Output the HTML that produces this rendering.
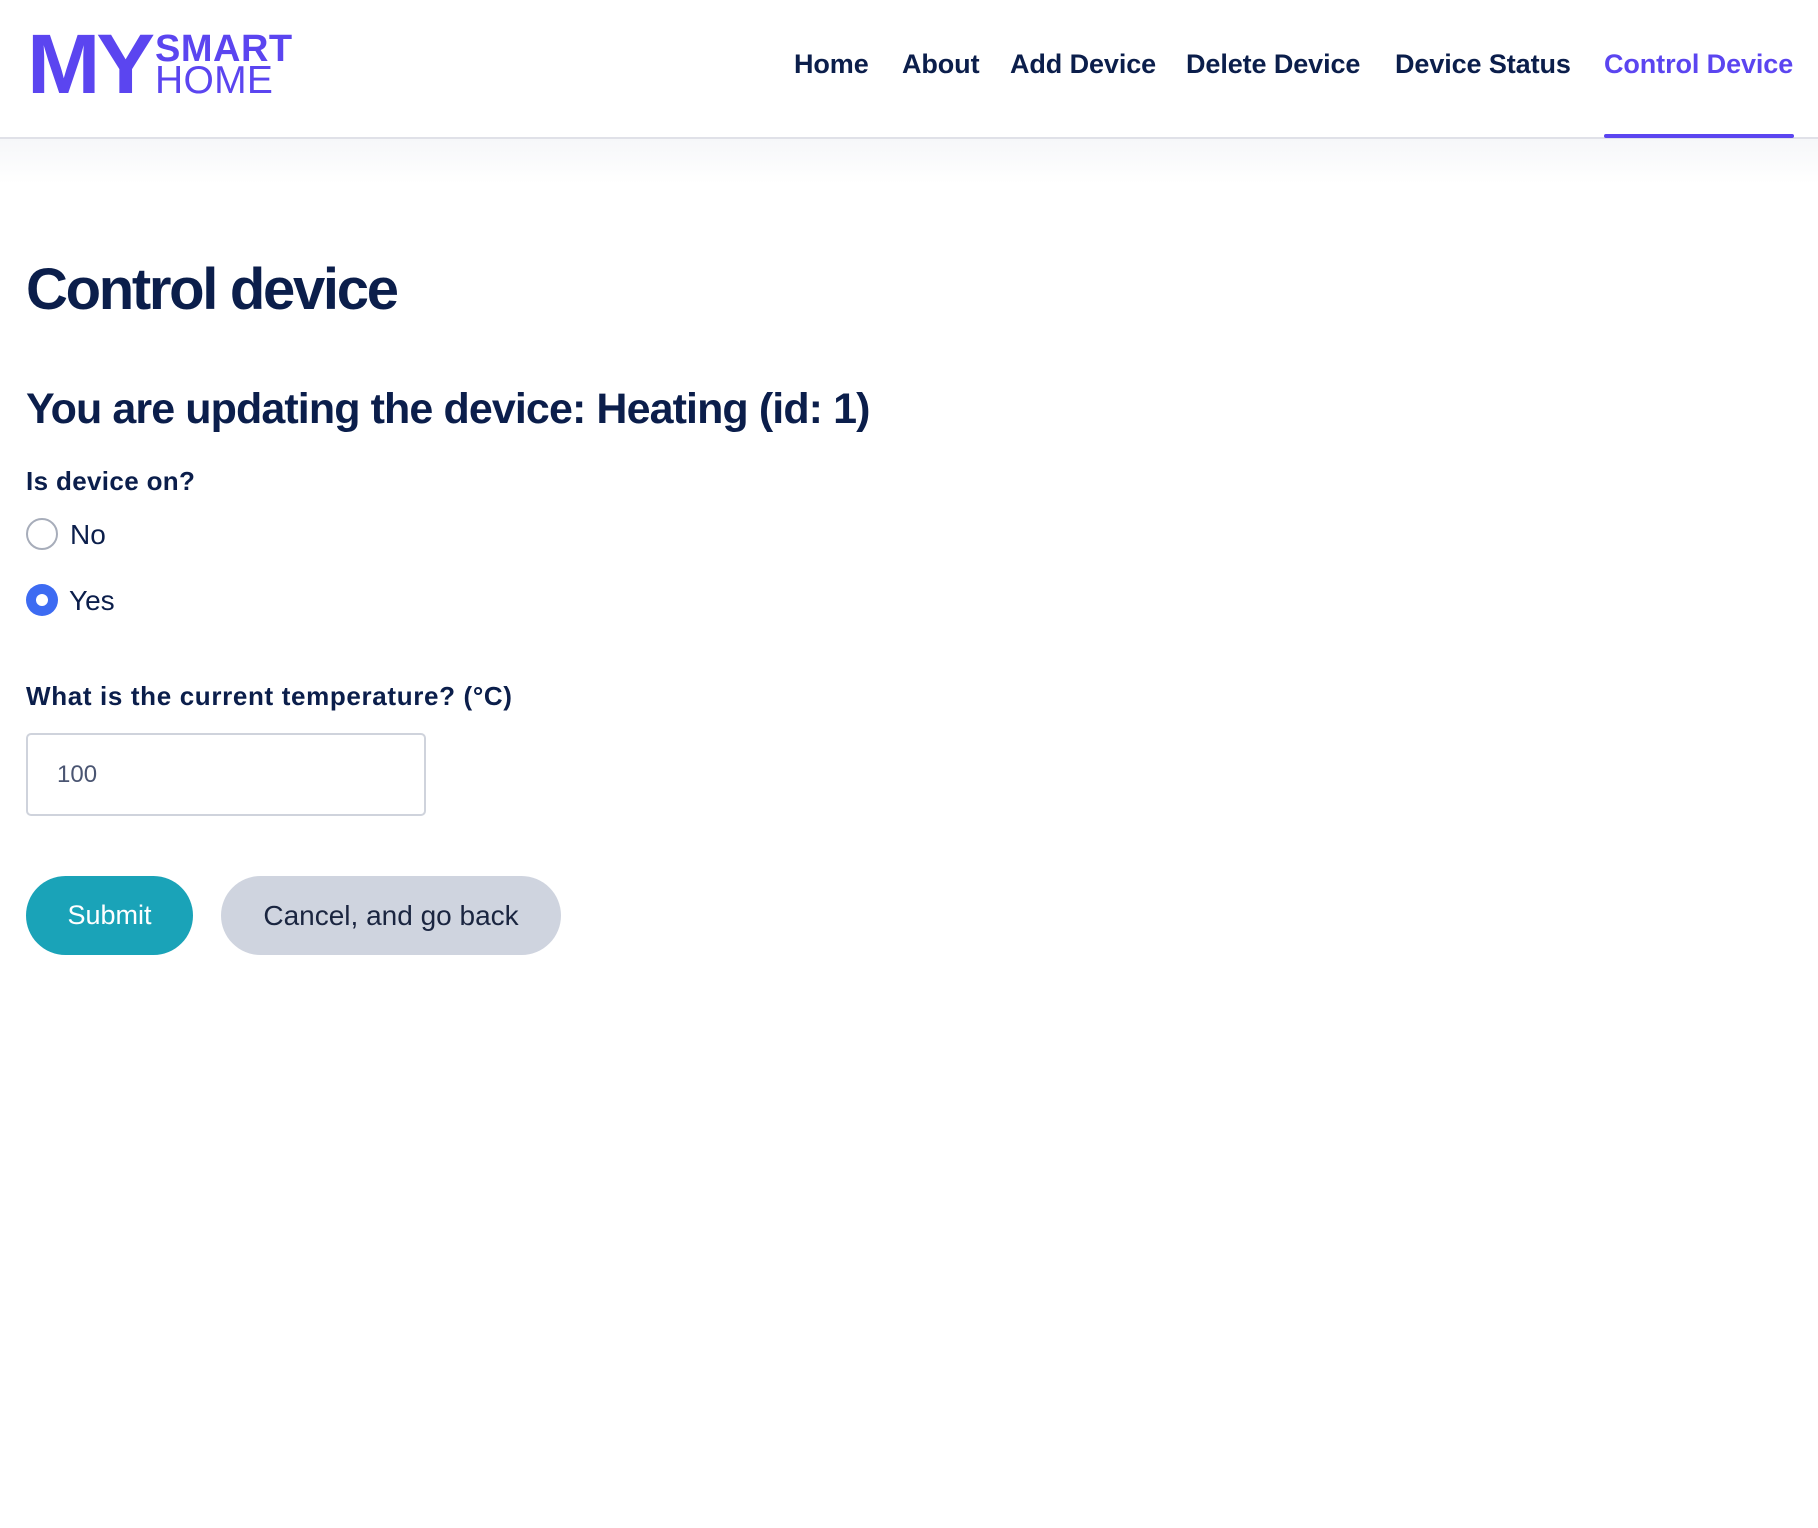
<!DOCTYPE html>
<html><head><meta charset="utf-8"><style>
*{margin:0;padding:0;box-sizing:border-box}
body{width:1818px;height:1528px;background:#fff;font-family:"Liberation Sans",Arial,sans-serif;color:#0b1e4b;position:relative;overflow:hidden}
.hdr{position:absolute;left:0;top:0;width:1818px;height:139px;border-bottom:2px solid #e0e1e8;background:#fff}
.shadow{position:absolute;left:0;top:139px;width:1818px;height:45px;background:linear-gradient(#f6f7f9,#fff)}
.logo{position:absolute;color:#5b45f0;font-weight:bold}
.nav{position:absolute;top:49px;font-size:27px;font-weight:bold;color:#0b1e4b;letter-spacing:-0.1px;white-space:nowrap}
.ul{position:absolute;left:1604px;top:134px;width:190px;height:4px;background:#5b45f0;border-radius:2px}
.t{position:absolute;white-space:nowrap}
.radio{position:absolute;width:32px;height:32px;border-radius:50%}
</style></head><body>
<div class="hdr"></div>
<div class="shadow"></div>
<div class="logo" style="left:27px;top:22px;font-size:84px;letter-spacing:-4px;line-height:84px;transform:scaleX(1.05);transform-origin:left">MY</div>
<div class="logo" style="left:155px;top:30px;font-size:38px;line-height:38px;letter-spacing:0.5px">SMART</div>
<div class="logo" style="left:155px;top:62px;font-size:39px;line-height:38px;font-weight:normal;letter-spacing:0.3px">HOME</div>
<div class="nav" style="left:794px">Home</div>
<div class="nav" style="left:902px">About</div>
<div class="nav" style="left:1010px">Add Device</div>
<div class="nav" style="left:1186px">Delete Device</div>
<div class="nav" style="left:1395px">Device Status</div>
<div class="nav" style="left:1604px;color:#5b45f0">Control Device</div>
<div class="ul"></div>
<div class="t" style="left:26px;top:256px;font-size:58px;font-weight:bold;letter-spacing:-2.3px">Control device</div>
<div class="t" style="left:26px;top:385px;font-size:43px;font-weight:bold;letter-spacing:-0.9px">You are updating the device: Heating (id: 1)</div>
<div class="t" style="left:26px;top:466px;font-size:26px;font-weight:bold;letter-spacing:0.35px">Is device on?</div>
<div class="radio" style="left:26px;top:518px;border:2px solid #a7adba"></div>
<div class="t" style="left:70px;top:519px;font-size:28px">No</div>
<div class="radio" style="left:26px;top:584px;background:#3d6bf2"><div style="position:absolute;left:10px;top:10px;width:12px;height:12px;border-radius:50%;background:#fff"></div></div>
<div class="t" style="left:69px;top:585px;font-size:28px">Yes</div>
<div class="t" style="left:26px;top:681px;font-size:26px;font-weight:bold;letter-spacing:0.65px">What is the current temperature? (°C)</div>
<div style="position:absolute;left:26px;top:733px;width:400px;height:83px;border:2px solid #cfd3dc;border-radius:5px"></div>
<div class="t" style="left:57px;top:761px;font-size:24px;color:#4a5572">100</div>
<div style="position:absolute;left:26px;top:876px;width:167px;height:79px;border-radius:40px;background:#1aa3b8;color:#fff;font-size:27px;text-align:center;line-height:79px">Submit</div>
<div style="position:absolute;left:221px;top:876px;width:340px;height:79px;border-radius:40px;background:#cfd4df;color:#1a2540;font-size:28px;text-align:center;line-height:79px">Cancel, and go back</div>
</body></html>
